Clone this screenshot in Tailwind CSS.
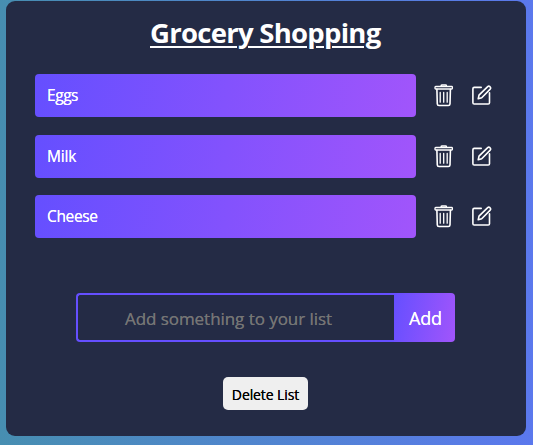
<!DOCTYPE html>
<html lang="en">
<head>
<meta charset="utf-8">
<title>Grocery Shopping</title>
<script src="https://cdn.jsdelivr.net/npm/@tailwindcss/browser@4"></script>
</head>
<body class="h-[445px] overflow-hidden bg-linear-to-r from-[#478eb1] to-[#5b78ed] pt-px pl-1.5 font-['Trebuchet_MS','Open_Sans',sans-serif] text-white">
<svg class="hidden">
  <symbol id="trash" viewBox="0 0 20 23">
    <g fill="none" stroke="#fff" stroke-linejoin="round" stroke-linecap="round">
      <path stroke-width="1.5" d="M7.2 2.2V1.7Q7.2 1 8 1h3.6q.8 0 .8.7v.5"/>
      <rect x="1" y="2.5" width="17.4" height="2.5" rx=".7" stroke-width="1.3"/>
      <path stroke-width="1.6" d="M2.9 5.4 3.3 20q.1 1.5 1.7 1.5h9.3q1.6 0 1.7-1.5l.4-14.6"/>
      <path stroke-width="1.3" d="M6.2 8.4v9.8M9.7 8.4v9.8M13.2 8.4v9.8"/>
    </g>
  </symbol>
  <symbol id="edit" viewBox="0 0 20 20">
    <g fill="none" stroke="#fff" stroke-width="1.6" stroke-linejoin="round" stroke-linecap="round">
      <path d="M9.2 2.4H2.2Q.9 2.4.9 3.7v14q0 1.3 1.3 1.3h14q1.3 0 1.3-1.3v-10"/>
      <path d="M6.2 13.8l.8-3.7 8.7-8.5q1.1-.9 2.3.1 1.2 1.2.2 2.4l-8.5 8.6z"/>
    </g>
  </symbol>
</svg>
<main class="flex h-[435px] w-[520px] flex-col items-center rounded-[9px] bg-[#242b45]">
  <h1 class="mt-3 h-10 w-[232px] text-[27.5px] leading-10 font-bold tracking-[-0.73px] whitespace-nowrap underline decoration-2 underline-offset-[3px]">Grocery Shopping</h1>
  <ul class="mt-[21px] flex w-full flex-col gap-[17.5px] pl-[29px]">
    <li class="flex h-[43px] items-center">
      <span class="flex h-full w-[381px] items-center rounded bg-linear-[100deg,#654fff,#a155fb] pl-3 text-[15.5px] tracking-[-0.45px] [text-shadow:0_0_0.6px_#fff]">Eggs</span>
      <svg class="ml-[18px] h-[23px] w-5"><use href="#trash"/></svg>
      <svg class="relative -top-px ml-[18px] h-5 w-5"><use href="#edit"/></svg>
    </li>
    <li class="flex h-[43px] items-center">
      <span class="flex h-full w-[381px] items-center rounded bg-linear-[100deg,#654fff,#a155fb] pt-px pl-3 text-[15.5px] tracking-[-0.2px] [text-shadow:0_0_0.6px_#fff]">Milk</span>
      <svg class="ml-[18px] h-[23px] w-5"><use href="#trash"/></svg>
      <svg class="ml-[18px] h-5 w-5"><use href="#edit"/></svg>
    </li>
    <li class="flex h-[43px] items-center">
      <span class="flex h-full w-[381px] items-center rounded bg-linear-[100deg,#654fff,#a155fb] pl-3 text-[15.5px] tracking-[-0.35px] [text-shadow:0_0_0.6px_#fff]">Cheese</span>
      <svg class="ml-[18px] h-[23px] w-5"><use href="#trash"/></svg>
      <svg class="relative -top-px ml-[18px] h-5 w-5"><use href="#edit"/></svg>
    </li>
  </ul>
  <form class="mt-[55px] mr-px flex h-[49px] w-[379px]">
    <input class="w-[318px] rounded-l border-2 border-r-0 border-[#654fff] pt-0.5 pr-[15px] text-center text-[17px] tracking-[-0.05px] placeholder:text-[#757575] [text-shadow:0_0_0.6px_#757575]" placeholder="Add something to your list">
    <button type="button" class="w-[61px] rounded-r bg-linear-[100deg,#654fff,#a155fb] pt-px pl-0.5 text-[18px] tracking-[-0.2px] [text-shadow:0_0_0.6px_#fff]">Add</button>
  </form>
  <button type="button" class="mt-[35px] mr-px h-[33px] w-[85px] rounded-[5px] bg-[#efefef] pt-px text-[14px] tracking-[-0.1px] whitespace-nowrap text-black [text-shadow:0_0_0.6px_#000]">Delete List</button>
</main>
</body>
</html>
